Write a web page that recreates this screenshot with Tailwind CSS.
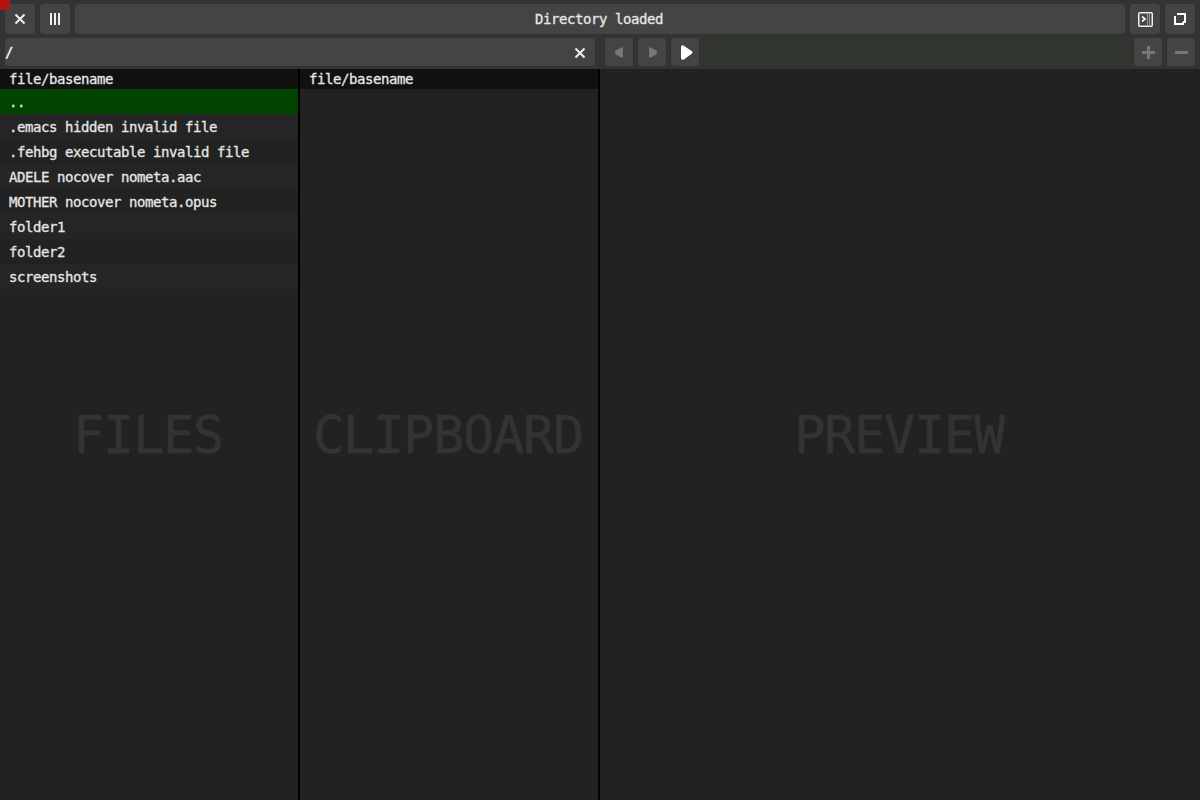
<!DOCTYPE html>
<html lang="en">
<head>
<meta charset="utf-8">
<title>Directory loaded</title>
<script src="https://cdn.jsdelivr.net/npm/@tailwindcss/browser@4"></script>
</head>
<body class="relative flex h-[800px] w-[1200px] flex-col overflow-hidden bg-[#222] font-['DejaVu_Sans_Mono',monospace] text-[14px] tracking-[-0.43px] text-[#e6e6e6] [-webkit-text-stroke:0.3px]">
<header class="h-[69px] shrink-0 bg-[#333] px-[5px] pt-1">
  <div class="flex h-[30px] gap-[5px]">
    <button class="size-[30px] rounded bg-[#444]"><svg width="30" height="30" fill="none" stroke="#eee" stroke-width="2"><path d="M10.500 10.500l9 9M19.500 10.500l-9 9"/></svg></button>
    <button class="size-[30px] rounded bg-[#444]"><svg width="30" height="30" fill="#eee"><path d="M10 9h2v12h-2zM14 9h2v12h-2zM18 9h2v12h-2z"/></svg></button>
    <div class="flex-1 rounded bg-[#444] pr-[2px] text-center leading-[31px]">Directory loaded</div>
    <button class="size-[30px] rounded bg-[#444]"><svg width="30" height="30" fill="none" stroke="#eee" stroke-width="1.500"><rect x="8.750" y="8.750" width="13.500" height="13.500" rx="1"/><path d="M12 12.500l3 2.500-3 2.500" stroke-width="1.800"/><path d="M17.500 10v11M19.500 10v11" stroke="#999" stroke-width="1"/></svg></button>
    <button class="size-[30px] rounded bg-[#444]"><svg width="30" height="30" fill="none" stroke="#fff" stroke-width="2"><path d="M12 10h8v8h-2M10 12v8h8v-2"/></svg></button>
  </div>
  <div class="mt-1 flex h-7 gap-[5px]">
    <div class="mr-[5px] flex w-[590px] justify-between rounded bg-[#444] leading-7 text-white"><span>/</span><svg width="30" height="28" fill="none" stroke="#eee" stroke-width="2"><path d="M10.500 10.500l9 9M19.500 10.500l-9 9"/></svg></div>
    <button class="size-7 rounded-[3px] bg-[#444]"><svg width="28" height="28" fill="#777"><path d="M18 9.500v10h-2l-6-3.500v-3l6-3.500z"/></svg></button>
    <button class="size-7 rounded-[3px] bg-[#444]"><svg width="28" height="28" fill="#777"><path d="M11 9.500v10h2l6-3.500v-3l-6-3.500z"/></svg></button>
    <button class="size-7 rounded bg-[#444]"><svg width="28" height="28" fill="#fff"><path d="M10 9Q10 7 12 7.200L21 13.300Q22 14.500 21 15.500L13 21.500Q10 22.500 10 20z"/></svg></button>
    <div class="flex-1 rounded-[3px] bg-[#31362f]"></div>
    <button class="size-7 rounded-[3px] bg-[#444]"><svg width="28" height="28" fill="#777"><path d="M8 13h5V8h3v5h5v3h-5v5h-3v-5H8z"/></svg></button>
    <button class="size-7 rounded-[3px] bg-[#444]"><svg width="28" height="28" fill="#777"><path d="M8 13h13v3H8z"/></svg></button>
  </div>
</header>
<main class="flex min-h-0 flex-1">
  <section class="relative w-[300px] border-r-2 border-black">
    <div class="h-5 bg-[#111] pl-[9px] leading-[21px]">file/basename</div>
    <div class="h-[25px] bg-[#040] pl-[9px] leading-[26px]">..</div>
    <div class="h-[25px] bg-[#252525] pl-[9px] leading-[26px]">.emacs hidden invalid file</div>
    <div class="h-[25px] pl-[9px] leading-[26px]">.fehbg executable invalid file</div>
    <div class="h-[25px] bg-[#252525] pl-[9px] leading-[26px]">ADELE nocover nometa.aac</div>
    <div class="h-[25px] pl-[9px] leading-[26px]">MOTHER nocover nometa.opus</div>
    <div class="h-[25px] bg-[#252525] pl-[9px] leading-[26px]">folder1</div>
    <div class="h-[25px] pl-[9px] leading-[26px]">folder2</div>
    <div class="h-[25px] bg-[#252525] pl-[9px] leading-[26px]">screenshots</div>
    <div class="absolute inset-0 flex items-center justify-center pr-[2px] text-[52px] tracking-[-1.3px] text-[#333] [-webkit-text-stroke:0.6px]">FILES</div>
  </section>
  <section class="relative w-[300px] border-r-2 border-black">
    <div class="h-5 bg-[#111] pl-[9px] leading-[21px]">file/basename</div>
    <div class="absolute inset-0 flex items-center justify-center pr-[2px] text-[52px] tracking-[-1.3px] text-[#333] [-webkit-text-stroke:0.6px]">CLIPBOARD</div>
  </section>
  <section class="flex flex-1 items-center justify-center pr-[2px] text-[52px] tracking-[-1.3px] text-[#333] [-webkit-text-stroke:0.6px]">PREVIEW</section>
</main>
<div class="absolute left-0 top-0 size-[10px] bg-[#c80f0f]/85"></div>
</body>
</html>
